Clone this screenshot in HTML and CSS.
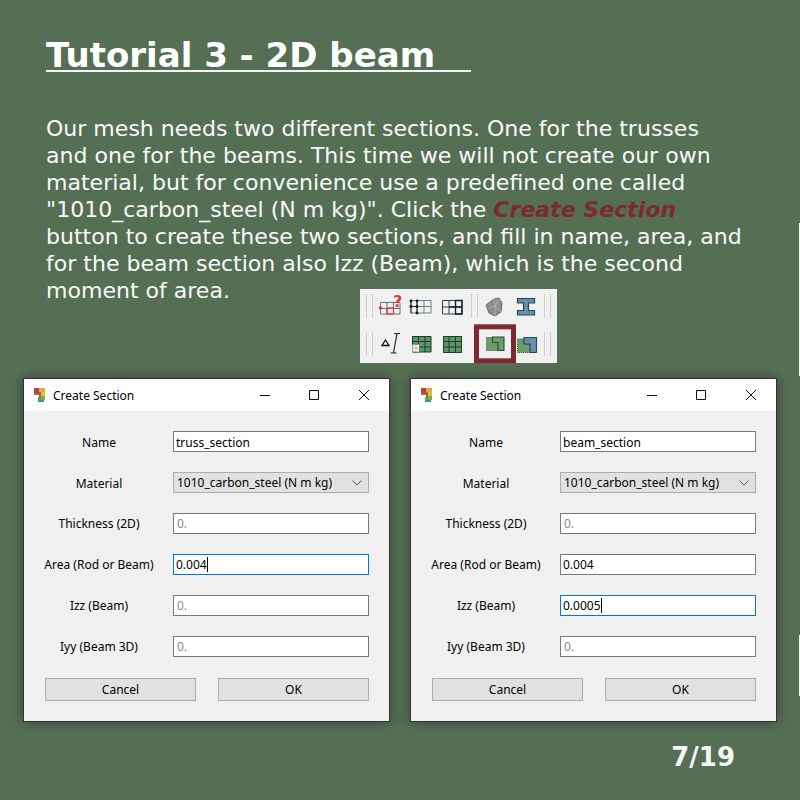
FILE: index.html
```html
<!DOCTYPE html>
<html lang="en">
<head>
    <meta charset="UTF-8">
    <meta name="viewport" content="width=device-width, initial-scale=1.0">
    <title>Tutorial 3 - 2D beam</title>
    <link rel="stylesheet" href="styles.css">
</head>
<body>
    <div class="slide">
        <h1 class="slide-title"><span>Tutorial 3 - 2D beam</span></h1>
        <p class="slide-text">Our mesh needs two different sections. One for the trusses<br>
        and one for the beams. This time we will not create our own<br>
        material, but for convenience use a predefined one called<br>
        "1010_carbon_steel (N m kg)". Click the <em>Create Section</em><br>
        button to create these two sections, and fill in name, area, and<br>
        for the beam section also Izz (Beam), which is the second<br>
        moment of area.</p>

        <div class="toolbar">
            <svg width="197" height="74" viewBox="360 289 197 74">
                <g class="seps">
                    <path d="M366.5 294V318M372.5 294V318M471.5 294V318M477.5 294V318M544.5 294V318M550.5 294V318"/>
                    <path d="M366.5 332V356M372.5 332V356M544.5 332V356M550.5 332V356"/>
                </g>
                <g filter="url(#soft)">
                    <!-- row 1 -->
                    <path d="M380.500 302.500H400V314H380.500ZM380.500 308.500H400M387 302.500V314M393.500 302.500V314" fill="none" stroke="#6b7278"/>
                    <rect x="387" y="308" width="6.500" height="6" fill="none" stroke="#d3403f" stroke-width="1.300"/>
                    <circle cx="380.500" cy="308" r="1.800" fill="#d3403f"/>
                    <text x="393" y="307" class="help">?</text>

                    <path d="M411 300.500H431V313H411ZM411 306.500H431M417 300.500V313M424 300.500V313" fill="none" stroke="#727a80"/>
                    <path d="M411 300V313.500M417 300V313.500M409.500 306.500H418" fill="none" stroke="#1d2a33" stroke-width="1"/>
                    <g fill="#111a20">
                        <circle cx="411" cy="301" r="1.400"/><circle cx="417" cy="301" r="1.400"/>
                        <circle cx="411" cy="306.500" r="1.400"/><circle cx="417" cy="306.500" r="1.400"/>
                        <circle cx="417" cy="313" r="1.400"/>
                    </g>

                    <path d="M442.500 300.500H462V314H442.500ZM442.500 307H462M449 300.500V314M455.500 300.500V314" fill="none" stroke="#34424e"/>
                    <path d="M455.500 300.500H462V314H455.500ZM449 307H462" fill="none" stroke="#16222c" stroke-width="1.400"/>

                    <path d="M486 305L494 299L499 298L502 303L501 312L495 316L489 313Z" fill="#8b8f90" stroke="#6a6e70"/>
                    <path d="M494 299L495 306L501 312M495 306L489 308M495 306L499 298M495 306L495 316" fill="none" stroke="#b5b8b9" stroke-width=".8"/>

                    <path d="M517.500 298.500H534.500V303H528.500V310.500H534.500V315H517.500V310.500H523.500V303H517.500Z" fill="#6690a6" stroke="#27475c" stroke-width="1.200"/>

                    <!-- row 2 -->
                    <path d="M385.500 340L389 345.500H382Z" fill="none" stroke="#111" stroke-width="1.300"/>
                    <path d="M394 333.500H400M397 333.500L393.500 353M390.500 353H396.500" fill="none" stroke="#1c2730" stroke-width="1.200"/>

                    <rect x="412" y="336" width="19" height="16" fill="#5f9460"/>
                    <path d="M412.500 336.500H431V352H412.500ZM412.500 341.500H431M412.500 347H431M418.500 336.500V352M425 336.500V352" fill="none" stroke="#1f3a32"/>
                    <rect x="412" y="344" width="7.500" height="8" fill="#f4f4f4"/>
                    <path d="M412.500 344.500H419.500V352H412.500Z" fill="none" stroke="#444" stroke-dasharray="1 1"/>
                    <path d="M412.500 348H419.500M416 344.500V352" fill="none" stroke="#888" stroke-dasharray="1 1"/>

                    <rect x="443" y="336" width="19" height="17" fill="#5f9460"/>
                    <path d="M443.500 336.500H461.500V352.500H443.500ZM443.500 341.500H461.500M443.500 347H461.500M449 336.500V352.500M455.500 336.500V352.500" fill="none" stroke="#1f3a32"/>

                    <path d="M486.500 337.500H492.500V342.500H498V350.500H486.500Z" fill="#6a9f68" stroke="#3d4a44" stroke-dasharray="1 1"/>
                    <path d="M492.500 337H504V350.500H498V342.500H492.500Z" fill="#6a9f68" stroke="#2e4a44" stroke-width="1.100"/>

                    <path d="M517.500 339H524V344H530V352.500H517.500Z" fill="#6a9f68" stroke="#3d4a44" stroke-dasharray="1 1"/>
                    <path d="M524 337.500H536.500V352.500H530V344H524Z" fill="#6690a6" stroke="#27475c" stroke-width="1.100"/>
                </g>
                <rect x="476.500" y="326.800" width="37" height="34" class="selected"/>
                <defs>
                    <filter id="soft"><feGaussianBlur stdDeviation="0.35"/></filter>
                </defs>
            </svg>
        </div>

        <div class="dialogs">
            <section class="dialog">
                <header class="titlebar">
                    <svg class="app-icon" width="13" height="14" viewBox="0 0 13 14">
                        <rect x="0" y="0" width="5" height="5" fill="#b5433f"/>
                        <rect x="5" y="0" width="6" height="4" fill="#d8b23c"/>
                        <rect x="0" y="5" width="5" height="2" fill="#7d7a6a"/>
                        <rect x="7" y="4" width="4" height="4" fill="#d9c23f"/>
                        <rect x="5" y="4" width="2" height="5" fill="#c9503a"/>
                        <rect x="4" y="9" width="3" height="3" fill="#58a457"/>
                        <rect x="7" y="8" width="4" height="4" fill="#6fb04e"/>
                        <rect x="4" y="12" width="6" height="2" fill="#4a86c4"/>
                    </svg>
                    <span class="window-name">Create Section</span>
                    <div class="window-btns">
                        <svg width="10" height="10" viewBox="0 0 10 10"><path d="M0 5.500H10"/></svg>
                        <svg width="10" height="10" viewBox="0 0 10 10"><path d="M.5 .5H9.500V9.500H.5Z"/></svg>
                        <svg width="10" height="10" viewBox="0 0 10 10"><path d="M0 0L10 10M10 0L0 10"/></svg>
                    </div>
                </header>
                <div class="dialog-body">
                    <div class="form-grid">
                        <label>Name</label>
                        <div class="field">truss_section</div>
                        <label>Material</label>
                        <div class="field combo">1010_carbon_steel (N m kg)
                            <svg width="10" height="6" viewBox="0 0 10 6"><path d="M.5 .5L5 5L9.500 .5"/></svg>
                        </div>
                        <label>Thickness (2D)</label>
                        <div class="field empty">0.</div>
                        <label>Area (Rod or Beam)</label>
                        <div class="field focus">0.004<span class="caret"></span></div>
                        <label>Izz (Beam)</label>
                        <div class="field empty">0.</div>
                        <label>Iyy (Beam 3D)</label>
                        <div class="field empty">0.</div>
                    </div>
                    <div class="actions">
                        <button>Cancel</button>
                        <button>OK</button>
                    </div>
                </div>
            </section>

            <section class="dialog">
                <header class="titlebar">
                    <svg class="app-icon" width="13" height="14" viewBox="0 0 13 14">
                        <rect x="0" y="0" width="5" height="5" fill="#b5433f"/>
                        <rect x="5" y="0" width="6" height="4" fill="#d8b23c"/>
                        <rect x="0" y="5" width="5" height="2" fill="#7d7a6a"/>
                        <rect x="7" y="4" width="4" height="4" fill="#d9c23f"/>
                        <rect x="5" y="4" width="2" height="5" fill="#c9503a"/>
                        <rect x="4" y="9" width="3" height="3" fill="#58a457"/>
                        <rect x="7" y="8" width="4" height="4" fill="#6fb04e"/>
                        <rect x="4" y="12" width="6" height="2" fill="#4a86c4"/>
                    </svg>
                    <span class="window-name">Create Section</span>
                    <div class="window-btns">
                        <svg width="10" height="10" viewBox="0 0 10 10"><path d="M0 5.500H10"/></svg>
                        <svg width="10" height="10" viewBox="0 0 10 10"><path d="M.5 .5H9.500V9.500H.5Z"/></svg>
                        <svg width="10" height="10" viewBox="0 0 10 10"><path d="M0 0L10 10M10 0L0 10"/></svg>
                    </div>
                </header>
                <div class="dialog-body">
                    <div class="form-grid">
                        <label>Name</label>
                        <div class="field">beam_section</div>
                        <label>Material</label>
                        <div class="field combo">1010_carbon_steel (N m kg)
                            <svg width="10" height="6" viewBox="0 0 10 6"><path d="M.5 .5L5 5L9.500 .5"/></svg>
                        </div>
                        <label>Thickness (2D)</label>
                        <div class="field empty">0.</div>
                        <label>Area (Rod or Beam)</label>
                        <div class="field">0.004</div>
                        <label>Izz (Beam)</label>
                        <div class="field focus">0.0005<span class="caret"></span></div>
                        <label>Iyy (Beam 3D)</label>
                        <div class="field empty">0.</div>
                    </div>
                    <div class="actions">
                        <button>Cancel</button>
                        <button>OK</button>
                    </div>
                </div>
            </section>
        </div>

        <div class="page-num">7/19</div>
        <i class="edge edge-a"></i>
        <i class="edge edge-b"></i>
    </div>
</body>
</html>
```

FILE: styles.css
```css
/* Slide */
* {
    box-sizing: border-box;
    margin: 0;
    padding: 0;
}
body {
    background: #556f55;
    font-family: 'DejaVu Sans', sans-serif;
    color: #fff;
    overflow: hidden;
}
.slide {
    position: relative;
    width: 800px;
    height: 800px;
    padding-top: 35px;
}
.slide-title {
    margin-left: 46px;
    width: 425px;
    height: 37px;
    border-bottom: 2px solid #f4f6f4;
    font-size: 34px;
    line-height: 40px;
    font-weight: bold;
    white-space: nowrap;
}
.slide-text {
    margin: 43px 0 0 46px;
    font-size: 22.04px;
    line-height: 27px;
    white-space: nowrap;
    color: #f8f9f8;
}
.slide-text em {
    color: #7d2a2e;
    font-weight: bold;
    font-style: italic;
}

/* Toolbar picture */
.toolbar {
    width: 197px;
    height: 74px;
    margin: -15px 0 0 360px;
    background: #f0f0f0;
}
.toolbar svg {
    display: block;
}
.seps path {
    fill: none;
    stroke: #cfcfcf;
}
.help {
    font-family: 'DejaVu Sans', sans-serif;
    font-size: 16px;
    font-weight: bold;
    fill: #d3403f;
}
.selected {
    fill: none;
    stroke: #7d2a2e;
    stroke-width: 5;
}

/* Dialogs */
.dialogs {
    display: flex;
    gap: 20px;
    margin: 15px 0 0 23px;
}
.dialog {
    width: 367px;
    height: 344px;
    border: 1px solid #333;
    background: #f0f0f0;
    color: #000;
    box-shadow: 0 0 12px rgba(0, 0, 0, 0.4);
    font-family: 'Noto Sans', sans-serif;
    font-size: 12px;
}
.titlebar {
    display: flex;
    align-items: center;
    height: 32px;
    padding-left: 10px;
    background: #fff;
}
.app-icon {
    margin-right: 6px;
}
.window-btns {
    display: flex;
    gap: 39px;
    margin-left: auto;
    margin-right: 20px;
}
.window-btns svg {
    display: block;
    fill: none;
    stroke: #111;
}
.window-btns svg:last-child {
    margin-left: 1px;
}
.form-grid {
    display: grid;
    grid-template-columns: 110px 196px;
    grid-auto-rows: 21px;
    column-gap: 19px;
    row-gap: 20px;
    align-items: center;
    padding: 20px 0 0 20px;
}
.form-grid label {
    text-align: center;
}
/* first row text and the Material label sit a pixel lower in the original */
.form-grid > :nth-child(-n+3) {
    padding-top: 2px;
}
.field {
    display: flex;
    align-items: center;
    height: 21px;
    padding-left: 2px;
    border: 1px solid #7a7a7a;
    background: #fff;
    white-space: nowrap;
}
.field.empty {
    color: #8a8a8a;
    padding-left: 3px;
}
.field.focus {
    border-color: #0078d7;
}
.field.combo {
    justify-content: space-between;
    padding: 0 6px 0 3px;
    border-color: #adadad;
    background: #e1e1e1;
}
.combo svg {
    fill: none;
    stroke: #555;
}
.caret {
    width: 1px;
    height: 15px;
    background: #000;
}
.actions {
    display: flex;
    gap: 22px;
    padding: 21px 0 0 21px;
}
.actions button {
    width: 151px;
    height: 23px;
    border: 1px solid #adadad;
    background: #e1e1e1;
    color: #000;
    font: inherit;
}

/* Page number and stray edge marks */
.page-num {
    position: absolute;
    right: 65px;
    top: 742px;
    font-size: 26px;
    font-weight: bold;
    color: #f4f6f4;
}
.edge {
    position: absolute;
    right: 0;
    width: 1px;
    background: #fff;
}
.edge-a {
    top: 223px;
    height: 153px;
}
.edge-b {
    top: 635px;
    height: 61px;
}
```
